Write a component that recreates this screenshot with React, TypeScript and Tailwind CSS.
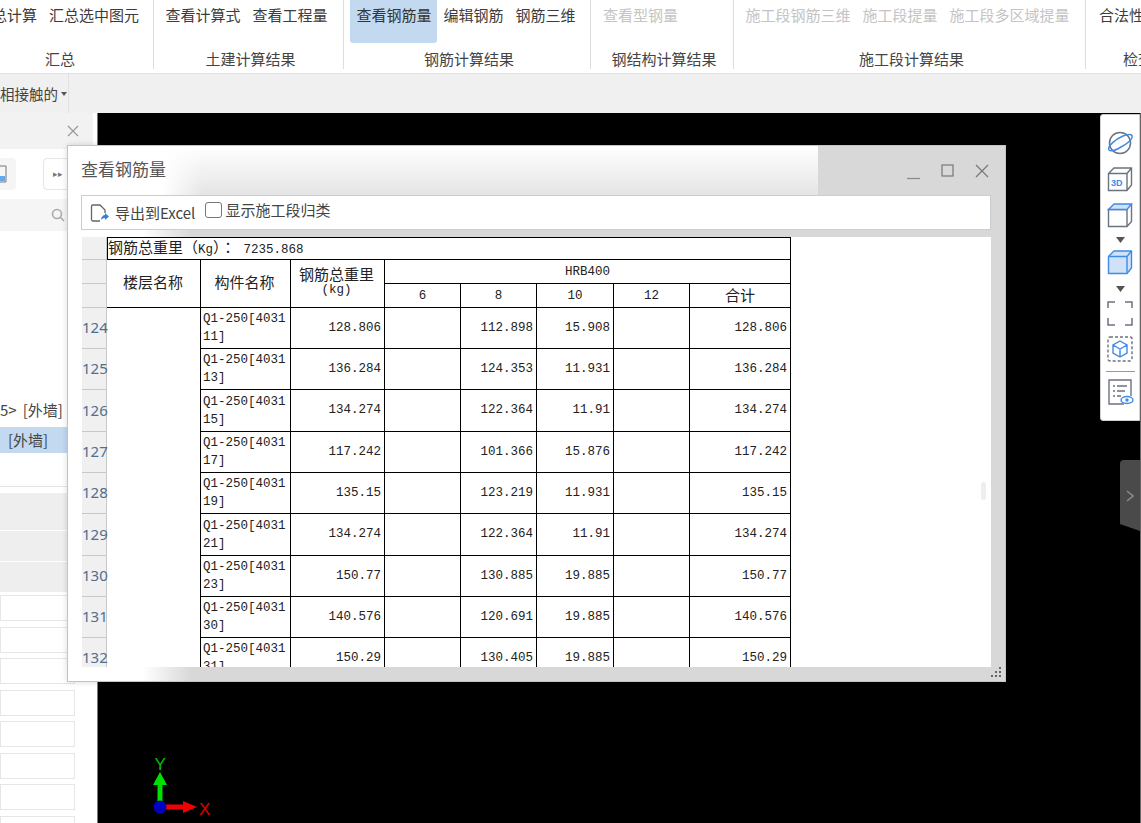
const groups = [
  { w: "w-[187px] -ml-[33px]", pad: "justify-end pr-[14px]", label: "汇总", first: true, items: [{ t: "汇总计算" }, { t: "汇总选中图元" }] },
  { w: "w-[190px]", pad: "justify-center pr-[4px]", label: "土建计算结果", items: [{ t: "查看计算式" }, { t: "查看工程量" }] },
  { w: "w-[247px]", pad: "justify-center pr-[2px]", label: "钢筋计算结果", items: [{ t: "查看钢筋量", on: true }, { t: "编辑钢筋" }, { t: "钢筋三维" }] },
  { w: "w-[143px]", pad: "pl-[12px]", label: "钢结构计算结果", items: [{ t: "查看型钢量", off: true }] },
  { w: "w-[352px]", pad: "justify-center pr-[4px]", label: "施工段计算结果", items: [{ t: "施工段钢筋三维", off: true }, { t: "施工段提量", off: true }, { t: "施工段多区域提量", off: true }] },
  { w: "w-[100px]", pad: "pl-[13px]", label: "检查", last: true, items: [{ t: "合法性检查" }] },
];

const rows = [
  ["124", "Q1-250[403111]", "128.806", "", "112.898", "15.908", "", "128.806"],
  ["125", "Q1-250[403113]", "136.284", "", "124.353", "11.931", "", "136.284"],
  ["126", "Q1-250[403115]", "134.274", "", "122.364", "11.91", "", "134.274"],
  ["127", "Q1-250[403117]", "117.242", "", "101.366", "15.876", "", "117.242"],
  ["128", "Q1-250[403119]", "135.15", "", "123.219", "11.931", "", "135.15"],
  ["129", "Q1-250[403121]", "134.274", "", "122.364", "11.91", "", "134.274"],
  ["130", "Q1-250[403123]", "150.77", "", "130.885", "19.885", "", "150.77"],
  ["131", "Q1-250[403130]", "140.576", "", "120.691", "19.885", "", "140.576"],
  ["132", "Q1-250[403131]", "150.29", "", "130.405", "19.885", "", "150.29"],
];

const gutter = "border-r border-b border-[#c9c9c9] bg-[#f0f0f0] p-0";
const cell = "border-r border-b border-black p-0";
const cjk = "font-['Noto_Sans_CJK_SC',sans-serif]";

function Ribbon() {
  return (
    <div className="flex h-[74px] overflow-hidden border-b border-[#e2e2e2] bg-white">
      {groups.map((g: any) => (
        <div
          key={g.label}
          className={`${g.w} flex h-[69px] shrink-0 flex-col ${g.last ? "" : "border-r border-[#dedede]"}`}
        >
          <div className={`flex h-[43px] shrink-0 gap-[12px] overflow-hidden ${g.pad}`}>
            {g.items.map((i: any) => (
              <div
                key={i.t}
                className={`h-[43px] shrink-0 whitespace-nowrap rounded-b-[3px] pt-[4px] text-[15px] leading-[22px] ${
                  i.on ? "-mx-[6px] bg-[#c2d9f0] px-[6px] text-[#333]" : i.off ? "text-[#c4c4c4]" : "text-[#3c3c3c]"
                }`}
              >
                {i.t}
              </div>
            ))}
          </div>
          <div className={`pt-[6px] text-center text-[15px] leading-[20px] text-[#444] ${g.first ? "" : "pl-[4px]"}`}>{g.label}</div>
        </div>
      ))}
    </div>
  );
}

function LeftPanel() {
  return (
    <div className="flex h-full w-[93px] shrink-0 flex-col overflow-hidden bg-white">
      <div className="flex h-[36px] shrink-0 items-center justify-end bg-[#f2f2f2] pr-[14px]">
        <svg width="12" height="12" viewBox="0 0 12 12" stroke="#999" strokeWidth="1.2">
          <path d="M1 1l10 10M11 1L1 11" />
        </svg>
      </div>
      <div className="flex h-[50px] shrink-0 items-center gap-[27px] bg-white">
        <div className="flex h-[32px] w-[16px] items-center rounded-r-[4px] bg-[#f5f5f5]">
          <svg width="7" height="20" viewBox="0 0 7 20" fill="none">
            <path d="M0 2h6v16H0" stroke="#777" />
            <path d="M0 12h5v5H0z" fill="#6aa5e6" />
          </svg>
        </div>
        <div className="flex h-[32px] w-[40px] items-center rounded-[4px] border border-[#e5e5e5] pl-[9px] text-[9px] text-[#777]">▸▸</div>
      </div>
      <div className="flex h-[32px] shrink-0 items-center justify-end bg-[#f5f5f5] pr-[28px]">
        <svg width="14" height="14" viewBox="0 0 14 14" fill="none" stroke="#aaa" strokeWidth="1.6">
          <circle cx="6" cy="6" r="4.5" />
          <path d="M9.5 9.5L13 13" />
        </svg>
      </div>
      <div className="mt-[166px] h-[30px] shrink-0 whitespace-nowrap text-[15px] leading-[26px] text-[#444]">
        5&gt;<span className="ml-[6px]">[外墙]</span>
      </div>
      <div className="h-[26px] shrink-0 whitespace-nowrap bg-[#c2d9f0] pl-[8px] text-[15px] leading-[26px] text-[#444]">[外墙]</div>
      <div className="h-[34px] shrink-0 border-b border-[#e4e4e4]" />
      <div className="mt-[6px] h-[37px] shrink-0 bg-[#eeeeee]" />
      <div className="mt-px h-[30px] shrink-0 bg-[#eeeeee]" />
      <div className="mt-px h-[30px] shrink-0 bg-[#eeeeee]" />
      <div className="flex shrink-0 flex-col gap-[5.5px] pt-[3px]">
        {[0, 1, 2, 3, 4, 5, 6, 7].map((n) => (
          <div key={n} className="h-[26px] w-[75px] shrink-0 border border-[#e6e6e6] bg-white" />
        ))}
      </div>
    </div>
  );
}

function Axes() {
  return (
    <svg className="absolute left-[152px] top-[639px]" width="70" height="70" viewBox="0 0 70 70">
      <path d="M8 55V32" stroke="#00e000" strokeWidth="5" />
      <path d="M8 20l7 13H1z" fill="#00e000" />
      <path d="M12 55h20" stroke="#f00000" strokeWidth="5" />
      <path d="M45 55l-14 6V49z" fill="#f00000" />
      <circle cx="8" cy="55" r="6.5" fill="#0000c0" />
      <text x="2.500" y="18" fontSize="17" fill="#00c000" fontFamily="Liberation Sans">Y</text>
      <text x="47" y="63" fontSize="17" fill="#e00000" fontFamily="Liberation Sans">X</text>
    </svg>
  );
}

function SideTools() {
  const s = "#6b7280";
  const b = "#3f8ae6";
  return (
    <div className="absolute left-[1100px] top-[1px] flex h-[307px] w-[40px] flex-col items-center rounded-l-[3px] border border-[#d0d0d0] bg-white pt-[14px]">
      <svg className="shrink-0" width="28" height="28" viewBox="0 0 28 28" fill="none" strokeWidth="1.5">
        <circle cx="14" cy="14" r="10.5" stroke={s} />
        <path d="M3 21C1 17 10 10 17 7c5-2 9-2 9 0 1 3-5 8-11 11-5 3-10 5-12 3z" stroke={b} />
      </svg>
      <svg className="mt-[8px] shrink-0" width="28" height="28" viewBox="0 0 28 28" fill="none" strokeWidth="1.4" stroke={s}>
        <path d="M2.5 8.5L8 3h17.5v17L21 25.500H2.500z M2.500 8.500H21v17 M21 8.500L25.500 3" />
        <text x="5" y="21" fontSize="9" fontWeight="700" fill={b} stroke="none" fontFamily="Liberation Sans">3D</text>
      </svg>
      <svg className="mt-[8px] shrink-0" width="28" height="28" viewBox="0 0 28 28" fill="none" strokeWidth="1.4" stroke={s}>
        <path d="M2.500 8.500H21v17H2.500z M21 25.500l4.500-5V3" />
        <path d="M2.500 8.500L8 3h17.500L21 8.500z" fill="#cfe2f8" stroke={b} />
      </svg>
      <svg className="mt-[8px] shrink-0" width="9" height="6" viewBox="0 0 9 6"><path d="M0 0h9L4.500 6z" fill="#555" /></svg>
      <svg className="mt-[5px] shrink-0" width="28" height="28" viewBox="0 0 28 28" fill="#cfe2f8" strokeWidth="1.4" stroke={b}>
        <path d="M2.500 8.500L8 3h17.500v17L21 25.500H2.500z" />
        <path d="M2.500 8.500H21v17 M21 8.500L25.500 3" />
      </svg>
      <svg className="mt-[10px] shrink-0" width="9" height="6" viewBox="0 0 9 6"><path d="M0 0h9L4.500 6z" fill="#555" /></svg>
      <svg className="mt-[7px] shrink-0" width="28" height="28" viewBox="0 0 28 28" fill="none" strokeWidth="1.5" stroke={s}>
        <path d="M2 9V3h7 M19 3h7v6 M26 19v7h-7 M9 26H2v-7" />
      </svg>
      <svg className="mt-[8px] shrink-0" width="28" height="28" viewBox="0 0 28 28" fill="none" strokeWidth="1.400">
        <rect x="2" y="2" width="24" height="24" rx="2" stroke={s} strokeDasharray="3 2" />
        <path d="M14 6l7 4v8l-7 4-7-4v-8z M7 10l7 4 7-4 M14 14v8" stroke={b} />
      </svg>
      <div className="mt-[8px] h-px w-[29px] shrink-0 bg-[#999]" />
      <svg className="mt-[6px] shrink-0" width="28" height="28" viewBox="0 0 28 28" fill="none" strokeWidth="1.400">
        <path d="M18 26H3V2h22v16" stroke={s} />
        <path d="M7 8h2M11 8h10M7 13h2M11 13h8M7 18h2M11 18h4" stroke={s} />
        <ellipse cx="21" cy="22" rx="6" ry="3.500" fill="#fff" stroke={b} />
        <circle cx="21" cy="22" r="1.700" fill={b} />
      </svg>
    </div>
  );
}

function Dialog() {
  return (
    <div className="absolute left-[67px] top-[145px] z-10 h-[537px] w-[939px] overflow-hidden border border-[#c4c4c4] bg-[#d8d8d8] shadow-[0_0_6px_rgba(0,0,0,0.15)]">
      <div className="absolute inset-y-0 left-0 w-[124px] bg-gradient-to-r from-white from-60% to-transparent" />
      <div className="absolute left-0 top-0 h-[50px] w-[750px] bg-gradient-to-b from-white to-[#e4e4e4]" />
      <div className="absolute left-0 top-0 h-[50px] w-[135px] bg-gradient-to-r from-white from-70% to-transparent" />

      <div className="relative flex h-[49px] items-center pl-[13px] pr-[16px]">
        <span className="-translate-y-[2px] flex-1 text-[17px] text-[#555]">查看钢筋量</span>
        <svg className="mr-[21px] mt-[6px]" width="13" height="13" viewBox="0 0 13 13" stroke="#888" strokeWidth="1.2"><path d="M0 11.500h13" /></svg>
        <svg className="mr-[21px]" width="13" height="13" viewBox="0 0 13 13" fill="none" stroke="#777" strokeWidth="1.2"><rect x="1" y="1" width="11" height="11" /></svg>
        <svg width="14" height="14" viewBox="0 0 14 14" stroke="#777" strokeWidth="1.2"><path d="M1 1l12 12M13 1L1 13" /></svg>
      </div>

      <div className="relative mx-[13px] flex h-[35px] w-[910px] items-center border border-[#c8ced2] bg-white pl-[8px] text-[#444]">
        <svg width="20" height="20" viewBox="0 0 20 20" fill="none" strokeWidth="1.300">
          <path d="M10 18H3a1.500 1.500 0 01-1.500-1.500v-13A1.500 1.500 0 013 2h7l5 5v3" stroke="#666" />
          <path d="M11 17c0-3 2-5 4-5v-2l4 3.500-4 3.500v-2c-1 0-3 .5-4 2z" fill="#2f80e0" />
        </svg>
        <span className="ml-[5px] translate-y-[1px] whitespace-nowrap text-[15px]">导出到Excel</span>
        <span className="ml-[10px] h-[16px] w-[17px] -translate-y-[3px] rounded-[3px] border border-[#777] bg-white" />
        <span className="ml-[3px] -translate-y-[2px] whitespace-nowrap text-[15px]">显示施工段归类</span>
      </div>

      <div className="relative ml-[14px] mt-[7px] h-[430px] w-[909px] overflow-hidden bg-white font-['Liberation_Mono','Noto_Sans_CJK_SC',monospace] text-[12.500px] leading-[17px] text-[#222]">
        <table className="w-[709px] table-fixed border-separate border-spacing-0">
          <colgroup>
            <col className="w-[25px]" />
            <col className="w-[94px]" />
            <col className="w-[90px]" />
            <col className="w-[94px]" />
            <col className="w-[76px]" />
            <col className="w-[76px]" />
            <col className="w-[77px]" />
            <col className="w-[76px]" />
            <col className="w-[101px]" />
          </colgroup>
          <tbody>
            <tr className="h-[23px]">
              <td className={gutter} />
              <td colSpan={8} className={`${cell} whitespace-nowrap border-t border-l align-middle`}>
                <span className={`${cjk} text-[15px] leading-[17px]`}>钢筋总重里（</span>
                Kg
                <span className="font-['Noto_Sans_CJK_TC',sans-serif] text-[15px] leading-[17px]">）：</span>
                <span className="ml-[8px]">7235.868</span>
              </td>
            </tr>
            <tr className="h-[24px]">
              <td className={gutter} />
              <td rowSpan={2} className={`${cell} ${cjk} pb-[4px] pr-[1px] text-center text-[15px]`}>楼层名称</td>
              <td rowSpan={2} className={`${cell} ${cjk} pb-[4px] pr-[2px] text-center text-[15px]`}>构件名称</td>
              <td rowSpan={2} className={`${cell} pb-[3px] pr-[2px] text-center`}>
                <div className={`${cjk} text-[15px]`}>钢筋总重里</div>
                <div>(kg)</div>
              </td>
              <td colSpan={5} className={`${cell} pt-[1px] text-center`}>HRB400</td>
            </tr>
            <tr className="h-[24px]">
              <td className={gutter} />
              <td className={`${cell} pt-[1px] text-center`}>6</td>
              <td className={`${cell} pt-[1px] text-center`}>8</td>
              <td className={`${cell} pt-[1px] text-center`}>10</td>
              <td className={`${cell} pt-[1px] text-center`}>12</td>
              <td className={`${cell} ${cjk} pb-[3px] text-center text-[15px]`}>合计</td>
            </tr>
            {rows.map((r, i) => (
              <tr key={r[0]} className={i === 2 || i === 5 ? "h-[42px]" : "h-[41px]"}>
                <td className={`${gutter} whitespace-nowrap pb-[1px] font-['Noto_Sans',sans-serif] text-[15px] text-[#4f6f90]`}>{r[0]}</td>
                {i === 0 && <td rowSpan={9} className={cell} />}
                <td className={`${cell} break-all pl-[2px] align-middle leading-[18px]`}>{r[1]}</td>
                {r.slice(2).map((v, j) => (
                  <td key={j} className={`${cell} pr-[3px] text-right`}>{v}</td>
                ))}
              </tr>
            ))}
          </tbody>
        </table>
        <div className="absolute left-[899px] top-[245px] h-[18px] w-[5px] rounded-full bg-[#eeeeee]" />
      </div>

      <div className="absolute right-[4px] bottom-[4px] grid grid-cols-3 gap-[2px]">
        {[0, 0, 1, 0, 1, 1, 1, 1, 1].map((on, i) => (
          <span key={i} className={`h-[2px] w-[2px] ${on ? "bg-[#666]" : ""}`} />
        ))}
      </div>
    </div>
  );
}

export default function App() {
  return (
    <div className="relative h-[823px] w-[1141px] overflow-hidden bg-[#f0f0f0] font-['Noto_Sans_CJK_SC',sans-serif]">
      <Ribbon />
      <div className="flex h-[39px] bg-[#f0f0f0]">
        <div className="flex w-[69px] items-center gap-[3px] border-r border-[#e2e2e2] pt-[1px] text-[14.500px] text-[#444]">
          <span className="whitespace-nowrap">相接触的</span>
          <svg width="6" height="4" viewBox="0 0 6 4"><path d="M0 0h6L3 4z" fill="#555" /></svg>
        </div>
      </div>
      <div className="relative flex h-[710px]">
        <LeftPanel />
        <div className="w-[5px] shrink-0 border-r border-[#777] bg-white" />
        <div className="flex-1 bg-black" />
        <Axes />
        <SideTools />
        <div className="absolute left-[1120px] top-[347px] flex h-[71px] w-[20px] items-center justify-center rounded-l-[4px] bg-[#4a4a4a] [clip-path:polygon(0_0,100%_0,100%_100%,0_90%)]">
          <svg width="8" height="12" viewBox="0 0 8 12" fill="none" stroke="#8a8a8a" strokeWidth="1.500"><path d="M1 1l6 5-6 5" /></svg>
        </div>
        <div className="absolute left-[1140px] top-0 h-full w-px bg-[#666]" />
      </div>
      <Dialog />
    </div>
  );
}
